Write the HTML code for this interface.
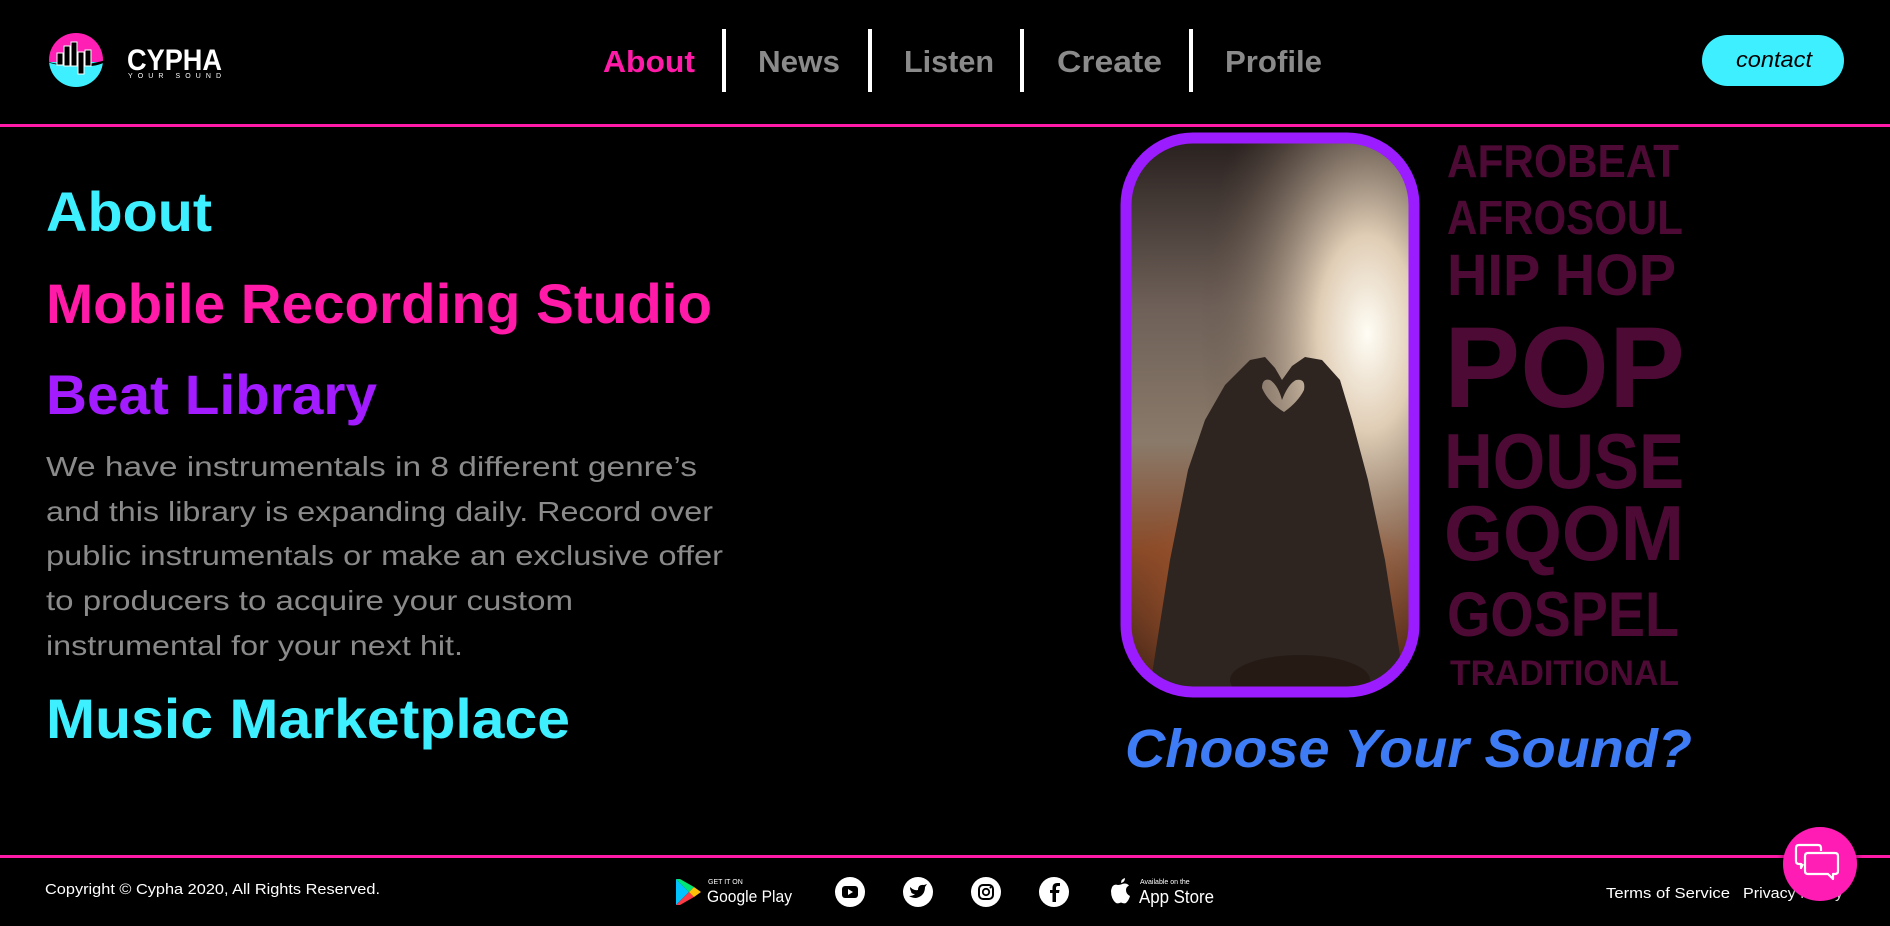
<!DOCTYPE html>
<html><head><meta charset="utf-8"><style>
html,body{margin:0;padding:0;background:#000;width:1890px;height:926px;overflow:hidden}
svg{display:block}
text{font-family:"Liberation Sans",Arial,sans-serif}
</style></head><body>
<svg width="1890" height="926" viewBox="0 0 1890 926" xmlns="http://www.w3.org/2000/svg">
<defs>
<clipPath id="ph"><rect x="1131" y="143" width="278" height="544" rx="62"/></clipPath>
<clipPath id="lc"><circle cx="76" cy="60" r="27"/></clipPath>
<radialGradient id="lite" cx="0.85" cy="0.35" r="0.6">
<stop offset="0" stop-color="#fffdf5"/><stop offset="0.3" stop-color="#e0cdb5"/><stop offset="1" stop-color="#5a4a40" stop-opacity="0"/></radialGradient>
<linearGradient id="bg" x1="0" y1="0" x2="0" y2="1">
<stop offset="0" stop-color="#2a2220"/><stop offset="0.3" stop-color="#6e6058"/><stop offset="0.55" stop-color="#8a7a6a"/><stop offset="0.75" stop-color="#8a4a28"/><stop offset="1" stop-color="#3a2015"/></linearGradient>
<radialGradient id="crowd" cx="0.5" cy="0.75" r="0.55"><stop offset="0" stop-color="#e0803f"/><stop offset="1" stop-color="#a0502a" stop-opacity="0"/></radialGradient>
<filter id="sh" x="-50%" y="-50%" width="200%" height="200%"><feDropShadow dx="0" dy="0" stdDeviation="4" flood-color="#000" flood-opacity="0.6"/></filter>
</defs>
<rect width="1890" height="926" fill="#000"/>

<!-- logo -->
<g clip-path="url(#lc)"><rect x="40" y="30" width="80" height="32" fill="#ff1fb4"/><rect x="40" y="62" width="80" height="30" fill="#3ef0ff"/></g>
<path d="M45 61 Q76 70 109 59 Q100 68 76 66 Q55 66 45 61Z" fill="#000"/>
<g fill="#000" stroke="#fff" stroke-width="1">
<rect x="57" y="53" width="6" height="12"/><rect x="64" y="46" width="6" height="20"/><rect x="71" y="42" width="6" height="24"/><rect x="78" y="52" width="6" height="22"/><rect x="85" y="50" width="6" height="16"/></g>
<text x="127" y="70" font-size="30" font-weight="bold" fill="#fff" textLength="95" lengthAdjust="spacingAndGlyphs">CYPHA</text>
<text x="128" y="78" font-size="7" fill="#fff" textLength="93" lengthAdjust="spacing">YOUR SOUND</text>

<!-- nav -->
<g font-weight="bold" font-size="31">
<text x="603" y="72" fill="#ff1aa8" textLength="92" lengthAdjust="spacingAndGlyphs">About</text>
<text x="758" y="72" fill="#8a8a8a" textLength="82" lengthAdjust="spacingAndGlyphs">News</text>
<text x="904" y="72" fill="#8a8a8a" textLength="90" lengthAdjust="spacingAndGlyphs">Listen</text>
<text x="1057" y="72" fill="#8a8a8a" textLength="105" lengthAdjust="spacingAndGlyphs">Create</text>
<text x="1225" y="72" fill="#8a8a8a" textLength="97" lengthAdjust="spacingAndGlyphs">Profile</text>
</g>
<g fill="#fff"><rect x="722" y="29" width="4" height="63"/><rect x="868" y="29" width="4" height="63"/><rect x="1020" y="29" width="4" height="63"/><rect x="1189" y="29" width="4" height="63"/></g>
<rect x="1702" y="35" width="142" height="51" rx="25.5" fill="#3ef0ff"/>
<text x="1736" y="67" font-size="22" font-style="italic" fill="#000" textLength="76" lengthAdjust="spacingAndGlyphs">contact</text>
<rect x="0" y="124" width="1890" height="3" fill="#ff1aa8"/>

<!-- left content -->
<g font-weight="bold" font-size="56">
<text x="46" y="231" fill="#3ef0ff" textLength="166" lengthAdjust="spacingAndGlyphs">About</text>
<text x="46" y="323" fill="#ff1aa8" textLength="666" lengthAdjust="spacingAndGlyphs">Mobile Recording Studio</text>
<text x="46" y="414" fill="#a21cff" textLength="331" lengthAdjust="spacingAndGlyphs">Beat Library</text>
<text x="46" y="738" fill="#3ef0ff" textLength="524" lengthAdjust="spacingAndGlyphs">Music Marketplace</text>
</g>
<g font-size="28" fill="#8a8a8a">
<text x="46" y="476" textLength="651" lengthAdjust="spacingAndGlyphs">We have instrumentals in 8 different genre’s</text>
<text x="46" y="521" textLength="667" lengthAdjust="spacingAndGlyphs">and this library is expanding daily. Record over</text>
<text x="46" y="565" textLength="677" lengthAdjust="spacingAndGlyphs">public instrumentals or make an exclusive offer</text>
<text x="46" y="610" textLength="527" lengthAdjust="spacingAndGlyphs">to producers to acquire your custom</text>
<text x="46" y="655" textLength="417" lengthAdjust="spacingAndGlyphs">instrumental for your next hit.</text>
</g>

<!-- phone image -->
<g clip-path="url(#ph)">
<rect x="1131" y="143" width="278" height="544" fill="url(#bg)"/>
<rect x="1131" y="143" width="278" height="544" fill="url(#lite)"/>
<rect x="1131" y="420" width="278" height="267" fill="url(#crowd)"/>
<path fill-rule="evenodd" fill="#2e2420" d="M1150 687 L1170 560 L1188 470 L1205 420 L1225 385 L1250 360 L1265 357 L1275 368 L1282 380 L1292 366 L1305 357 L1322 360 L1340 380 L1352 420 L1368 480 L1385 560 L1405 687 Z M1262 388 Q1262 378 1270 380 Q1278 385 1282 400 Q1288 384 1296 380 Q1306 378 1304 390 Q1298 402 1284 412 Q1268 402 1262 388 Z"/>
<ellipse cx="1300" cy="680" rx="70" ry="25" fill="#251a14"/>
</g>
<rect x="1126" y="138" width="288" height="554" rx="67" fill="none" stroke="#9b1cff" stroke-width="11"/>

<!-- genres -->
<g font-weight="bold" fill="#4d0a35">
<text x="1447" y="177" font-size="46" textLength="232" lengthAdjust="spacingAndGlyphs">AFROBEAT</text>
<text x="1447" y="234" font-size="48" textLength="236" lengthAdjust="spacingAndGlyphs">AFROSOUL</text>
<text x="1447" y="295" font-size="58" textLength="229" lengthAdjust="spacingAndGlyphs">HIP HOP</text>
<text x="1444" y="407" font-size="115" textLength="241" lengthAdjust="spacingAndGlyphs">POP</text>
<text x="1444" y="488" font-size="78" textLength="240" lengthAdjust="spacingAndGlyphs">HOUSE</text>
<text x="1444" y="560" font-size="78" textLength="240" lengthAdjust="spacingAndGlyphs">GQOM</text>
<text x="1447" y="636" font-size="63" textLength="232" lengthAdjust="spacingAndGlyphs">GOSPEL</text>
<text x="1450" y="685" font-size="35" textLength="229" lengthAdjust="spacingAndGlyphs">TRADITIONAL</text>
</g>
<text x="1125" y="767" font-size="54" font-weight="bold" font-style="italic" fill="#3d7cf5" textLength="567" lengthAdjust="spacingAndGlyphs">Choose Your Sound?</text>

<!-- footer -->
<rect x="0" y="855" width="1890" height="3" fill="#ff1aa8"/>
<text x="45" y="894" font-size="15" fill="#fff" textLength="335" lengthAdjust="spacingAndGlyphs">Copyright © Cypha 2020, All Rights Reserved.</text>
<path d="M676 879 L676 905 L689 892Z" fill="#00c3ff"/><path d="M676 879 L689 892 L694 887 L680 879Z" fill="#00e676"/><path d="M676 905 L689 892 L694 897 L680 905Z" fill="#ff3a44"/><path d="M689 892 L694 887 L701 892 L694 897Z" fill="#ffc107"/>
<text x="708" y="884" font-size="7" fill="#fff">GET IT ON</text>
<text x="707" y="902" font-size="17" fill="#fff" textLength="85" lengthAdjust="spacingAndGlyphs">Google Play</text>
<g fill="#fff"><circle cx="850" cy="892" r="15"/><circle cx="918" cy="892" r="15"/><circle cx="986" cy="892" r="15"/><circle cx="1054" cy="892" r="15"/></g>
<rect x="842" y="886" width="16" height="12" rx="3" fill="#000"/><path d="M848 889 L848 895 L853 892Z" fill="#fff"/>
<path d="M910 887 Q914 891 918 890 Q918 884 924 885 L927 884 L925 887 Q925 896 916 898 Q912 898 909 896 Q913 896 915 894 Q911 894 911 891 Q910 890 910 887Z" fill="#000"/>
<rect x="979" y="885" width="14" height="14" rx="4" fill="none" stroke="#000" stroke-width="2"/><circle cx="986" cy="892" r="3.2" fill="none" stroke="#000" stroke-width="1.8"/><circle cx="990.5" cy="887.5" r="1" fill="#000"/>
<path d="M1056 902 L1056 893 L1059 893 L1059.5 890 L1056 890 L1056 888 Q1056 886 1058 886 L1060 886 L1060 883 L1057 883 Q1052.5 883 1052.5 888 L1052.5 890 L1050 890 L1050 893 L1052.5 893 L1052.5 902Z" fill="#000"/>
<path d="M1118 885 Q1112 883 1111 891 Q1111 899 1116 903 Q1118 904 1121 902.5 Q1124 904 1126 903 Q1129 900 1130 896 Q1126 894 1126 890 Q1126 887 1129 885.5 Q1126 882 1121 884.5 Q1119 885 1118 885Z M1121 883 Q1121 879 1125 878 Q1125 882 1121 883Z" fill="#fff"/>
<text x="1140" y="884" font-size="7" fill="#fff">Available on the</text>
<text x="1139" y="903" font-size="18" fill="#fff" textLength="75" lengthAdjust="spacingAndGlyphs">App Store</text>
<text x="1606" y="898" font-size="15" fill="#fff" textLength="124" lengthAdjust="spacingAndGlyphs">Terms of Service</text>
<text x="1743" y="898" font-size="15" fill="#fff" textLength="100" lengthAdjust="spacingAndGlyphs">Privacy Policy</text>
<circle cx="1820" cy="864" r="37" fill="#ff1fb4" filter="url(#sh)"/>
<path d="M1799 845 h19 q3 0 3 3 v3 M1799 845 q-3 0 -3 3 v13 q0 3 3 3 h2 v4 l2 -4" fill="none" stroke="#fff" stroke-width="2.2" stroke-linejoin="round"/>
<path d="M1808 853 h27 q3 0 3 3 v15 q0 3 -3 3 h-2 v5 l-5 -5 h-20 q-3 0 -3 -3 v-15 q0 -3 3 -3Z" fill="#ff1fb4" stroke="#fff" stroke-width="2.2" stroke-linejoin="round"/>
</svg>
</body></html>
